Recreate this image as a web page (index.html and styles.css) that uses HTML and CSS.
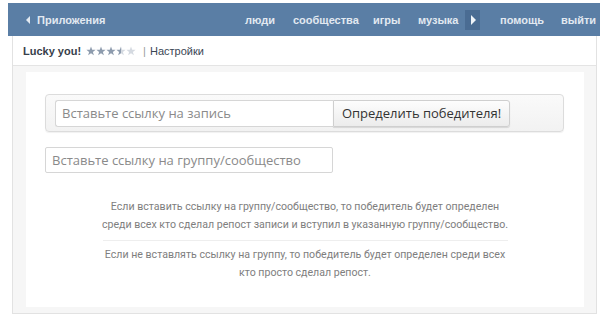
FILE: index.html
```html
<!DOCTYPE html>
<html lang="ru">
<head>
<meta charset="utf-8">
<link rel="stylesheet" href="styles.css">
</head>
<body>
<div class="topbar">
  <a class="back"><span class="tri-left"></span>Приложения</a>
  <nav class="menu">
    <a class="item w-people">люди</a>
    <a class="item w-groups">сообщества</a>
    <a class="item w-games">игры</a>
    <a class="item w-music">музыка</a>
    <span class="play"><span class="tri-right"></span></span>
    <a class="item w-help">помощь</a>
    <a class="item w-exit">выйти</a>
  </nav>
</div>
<div class="frame">
  <div class="apphead">
    <span class="title">Lucky you!</span>
    <span class="stars">
      <svg class="star on" viewBox="0 0 10 10"><polygon points="5,0.5 6.2,3.7 9.6,3.8 6.9,5.9 7.9,9.3 5,7.3 2.1,9.3 3.1,5.9 0.4,3.8 3.8,3.7"/></svg>
      <svg class="star on" viewBox="0 0 10 10"><polygon points="5,0.5 6.2,3.7 9.6,3.8 6.9,5.9 7.9,9.3 5,7.3 2.1,9.3 3.1,5.9 0.4,3.8 3.8,3.7"/></svg>
      <svg class="star on" viewBox="0 0 10 10"><polygon points="5,0.5 6.2,3.7 9.6,3.8 6.9,5.9 7.9,9.3 5,7.3 2.1,9.3 3.1,5.9 0.4,3.8 3.8,3.7"/></svg>
      <svg class="star half" viewBox="0 0 10 10"><defs><linearGradient id="hg"><stop offset="55%" stop-color="#8e9cae"/><stop offset="55%" stop-color="#d5dae1"/></linearGradient></defs><polygon fill="url(#hg)" points="5,0.5 6.2,3.7 9.6,3.8 6.9,5.9 7.9,9.3 5,7.3 2.1,9.3 3.1,5.9 0.4,3.8 3.8,3.7"/></svg>
      <svg class="star off" viewBox="0 0 10 10"><polygon points="5,0.5 6.2,3.7 9.6,3.8 6.9,5.9 7.9,9.3 5,7.3 2.1,9.3 3.1,5.9 0.4,3.8 3.8,3.7"/></svg>
    </span>
    <span class="sep">|</span>
    <a class="settings">Настройки</a>
  </div>
  <div class="stage">
    <div class="card">
      <div class="postbox">
        <div class="postinput">Вставьте ссылку на запись</div>
        <div class="btn">Определить победителя!</div>
      </div>
      <div class="groupinput">Вставьте ссылку на группу/сообщество</div>
      <div class="info">
        <p class="para">Если вставить ссылку на группу/сообщество, то победитель будет определен<br>среди всех кто сделал репост записи и вступил в указанную группу/сообщество.</p>
        <div class="rule"></div>
        <p class="para">Если не вставлять ссылку на группу, то победитель будет определен среди всех<br>кто просто сделал репост.</p>
      </div>
    </div>
  </div>
</div>
</body>
</html>
```
FILE: styles.css
```css
html, body { margin: 0; padding: 0; background: #fff; }
body { width: 607px; height: 323px; overflow: hidden; font-family: "Liberation Sans", Arial, sans-serif; }

.topbar {
  margin: 3px 7px 0 8px;
  height: 33px;
  background: #5a7ea5;
  display: flex;
  align-items: center;
  color: #e2e9f1;
  font-size: 11px;
  font-weight: bold;
}
.back { display: flex; align-items: center; padding-left: 18px; }
.tri-left {
  width: 0; height: 0;
  border-top: 4px solid transparent; border-bottom: 4px solid transparent;
  border-right: 4px solid #e2e9f1;
  margin-right: 7px;
}
.menu { display: flex; align-items: center; margin-left: auto; height: 100%; }
.item { display: block; }
.w-people { width: 48px; }
.w-groups { width: 80px; }
.w-games { width: 45px; }
.w-music { width: 47px; }
.w-help { width: 61px; }
.w-exit { width: 39px; }
.play {
  width: 15px; height: 20px;
  background: #4a6c93;
  display: flex; align-items: center; justify-content: center;
  margin-right: 20px;
}
.tri-right {
  width: 0; height: 0;
  border-top: 5px solid transparent; border-bottom: 5px solid transparent;
  border-left: 5px solid #eef3f8;
  margin-left: 1px;
}

.frame {
  margin: 0 10px 0 12px;
  border-left: 1px solid #e2e2e2;
  border-right: 1px solid #e2e2e2;
  border-bottom: 1px solid #e2e2e2;
}
.apphead {
  height: 29px;
  padding-left: 10px;
  display: flex;
  align-items: center;
  border-bottom: 1px solid #e4e4e4;
  font-size: 11px;
  color: #444;
}
.title { font-weight: bold; color: #37404a; }
.stars { margin-left: 5px; display: flex; align-items: center; }
.star { width: 10px; height: 10px; display: block; }
.star.on { fill: #8e9cae; }
.star.off { fill: #d5dae1; }
.sep { margin-left: 7px; color: #9a9a9a; }
.settings { margin-left: 4px; color: #3a4654; }

.stage {
  background: #f6f6f6;
  padding: 6px 12px 6px 13px;
}
.card {
  background: #fff;
  height: 235px;
  padding: 22px 0 0 19px;
  box-sizing: border-box;
  font-family: "Open Sans", sans-serif;
}
.postbox {
  width: 519px;
  height: 38px;
  box-sizing: border-box;
  border: 1px solid #dcdcdc;
  border-radius: 4px;
  background: linear-gradient(#fafafa, #f2f2f2);
  box-shadow: 0 1px 1px rgba(0,0,0,0.06);
  display: flex;
  align-items: center;
  padding-left: 9px;
}
.postinput {
  width: 278px;
  height: 27px;
  box-sizing: border-box;
  border: 1px solid #d6d6d6;
  border-right: none;
  border-radius: 3px 0 0 3px;
  background: #fff;
  color: #8a8a8a;
  font-size: 13px;
  line-height: 25px;
  padding-left: 6px;
}
.btn {
  width: 177px;
  height: 27px;
  box-sizing: border-box;
  border: 1px solid #cfcfcf;
  border-radius: 0 3px 3px 0;
  background: linear-gradient(#fdfdfd, #ececec);
  box-shadow: 0 1px 1px rgba(0,0,0,0.12);
  color: #333;
  font-size: 13px;
  line-height: 25px;
  text-align: center;
}
.groupinput {
  margin-top: 15px;
  width: 288px;
  height: 26px;
  box-sizing: border-box;
  border: 1px solid #d6d6d6;
  border-radius: 2px;
  color: #8a8a8a;
  font-size: 13px;
  line-height: 24px;
  padding-left: 6px;
}
.info {
  width: 460px;
  margin: 25px 0 0 30px;
  text-align: center;
  color: #7e7e7e;
  font-family: Roboto, sans-serif;
  font-size: 10.6px;
  line-height: 18px;
}
.para { margin: 0; white-space: nowrap; }
.rule { width: 405px; height: 1px; background: #eeeeee; margin: 6px auto 5px; }
```
